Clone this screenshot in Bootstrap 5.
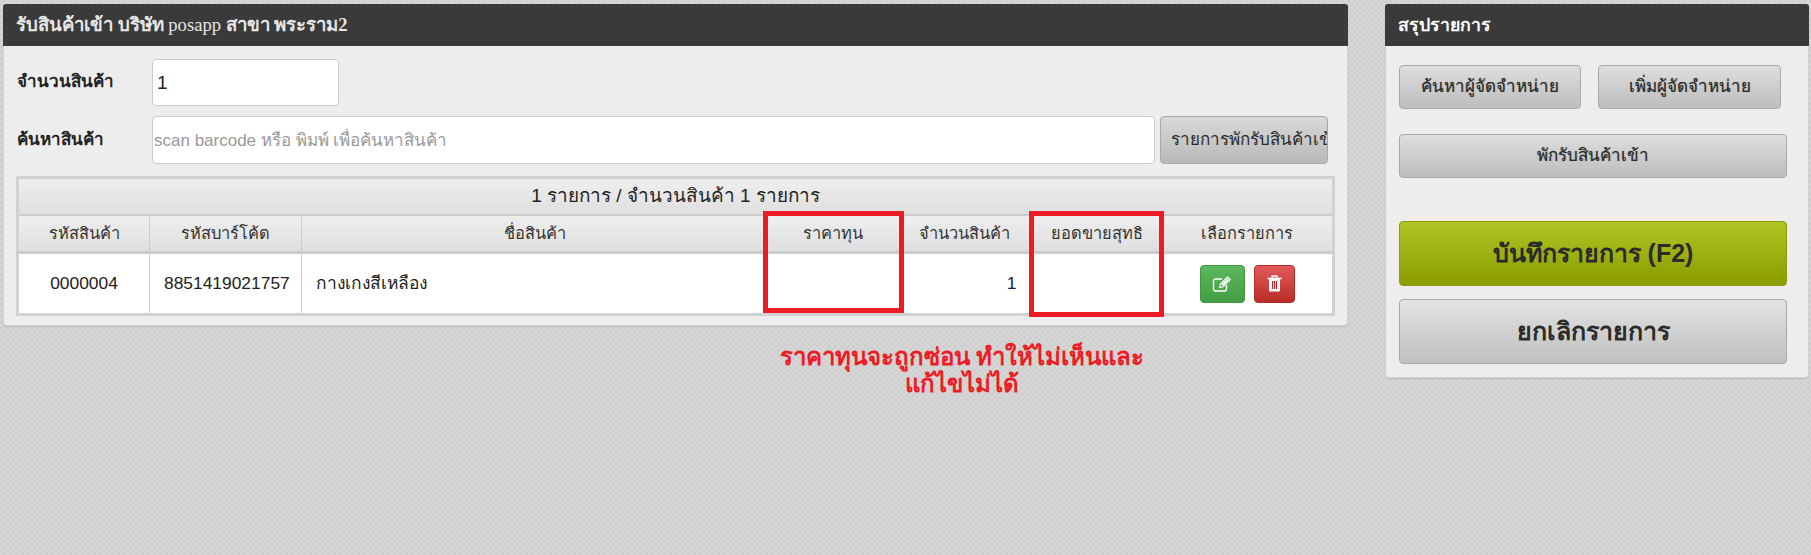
<!DOCTYPE html>
<html lang="th">
<head>
  <meta charset="UTF-8">
  <title>รับสินค้าเข้า</title>
  <link href="https://cdn.jsdelivr.net/npm/bootstrap@5.3.3/dist/css/bootstrap.min.css" rel="stylesheet">
  <style>
    html, body { height: 100%; }
    body {
      font-family: "Liberation Sans", "Noto Sans", sans-serif;
      color: #222;
      background-color: #d2d2d2;
      background-image: conic-gradient(#cfcfcf 25%, #d6d6d6 0 50%, #cfcfcf 0 75%, #d6d6d6 0);
      background-size: 6px 6px;
      overflow: hidden;
    }
    .page-wrap { padding: 4px 2px 0 3px; gap: 37px; position: relative; }
    .side-main { width: 1345px; flex: none; }
    .side-summary { width: 424px; flex: none; }
    .box-panel { background: #ededed; border: 1px solid #d2d2d2; border-top: 0; border-radius: 4px; box-shadow: 0 1px 1px #bbb; }
    .box-head {
      height: 42px; background: #3a3a3a; color: #e6e6e6; border-radius: 3px 3px 0 0;
      font: bold 18.6px/42px "Liberation Serif", "Noto Sans", serif;
      padding-left: 13px; margin: 0 -1px;
    }
    .head-sum { font: bold 17.7px/42px "Liberation Sans", "Noto Sans", sans-serif; color: #fff; }
    .head-light { font-weight: normal; }
    .box-body-main { padding: 13px 13px 12px 13px; height: 279px; }
    .field-row { display: flex; align-items: center; }
    .field-label { width: 135px; flex: none; font-weight: bold; font-size: 17px; margin-bottom: 1px; }
    .field-input {
      height: 48px; border: 1px solid #ccc; border-radius: 4px; background: #fff;
      font-size: 19px; padding: 0 1px; box-shadow: none; color: #222;
    }
    .qty-input { width: 187px; height: 47px; padding-left: 4px; }
    .field-input::placeholder { color: #999; font-size: 17px; }
    .grey-btn {
      border: 1px solid #a9a9a9; border-radius: 4px; color: #2b2b2b;
      background: linear-gradient(#dedede, #bdbdbd);
      font-size: 17px; padding: 0; white-space: nowrap; overflow: hidden;
      text-shadow: 0 0 1px #777;
    }
    .hold-btn { width: 168px; height: 48px; margin-left: 5px; flex: none; text-align: left; padding-left: 10px; text-shadow: none; background: linear-gradient(#d8d8d8, #b9b9b9); }
    .hold-gap { width: 6px; flex: none; }
    .search-row { margin-top: 10px; }
    .goods-table { width: 1319px; table-layout: fixed; border: 3px solid #d2d2d2; margin: 12px 0 0 -1px; background: #fff; border-collapse: collapse; font-size: 17.4px; }
    .goods-table th, .goods-table td { border: 1px solid #ccc; padding: 0 14px; vertical-align: middle; text-align: center; }
    .goods-table thead th { background: linear-gradient(#eeeeee, #dfdfdf); font-weight: normal; color: #333; height: 38px; font-size: 16.4px; border-bottom: 3px solid #ccc; }
    .goods-table thead tr:first-child th { height: 37px; font-size: 18.9px; border-bottom: 2px solid #ccc; color: #222; }
    .goods-table tbody td { height: 62px; background: #fff; }
    .goods-table .name-cell { text-align: left; }
    .goods-table .qty-cell { text-align: right; color: #111a55; }
    .goods-table .no-side { border-left: 0; border-right: 0; }
    .row-btn { width: 45px; height: 38px; border-radius: 4px; display: inline-flex; align-items: center; justify-content: center; padding: 0; }
    .edit-btn { background: linear-gradient(#5cb85c, #449d44); border: 1px solid #419641; }
    .del-btn { width: 41px; margin-left: 9px; background: linear-gradient(#e05a5a, #b92c28); border: 1px solid #b52b27; }
    .box-body-side { padding: 19px 13px 13px 13px; height: 331px; }
    .side-btn { height: 44px; display: block; }
    .find-btn { width: 182px; }
    .add-btn { width: 183px; margin-left: 17px; }
    .park-btn { width: 388px; margin-top: 25px; }
    .big-btn { width: 388px; height: 65px; font-size: 25px; font-weight: bold; text-shadow: none; display: block; }
    .save-btn { margin-top: 43px; border: 1px solid #8a9c00; background: linear-gradient(#b0c524, #8a9c00); }
    .cancel-btn { margin-top: 13px; background: linear-gradient(#e2e2e2, #c0c0c0); }
    .mark-box { position: absolute; border: 5px solid #ed1c24; pointer-events: none; }
    .mark-cost { left: 763px; top: 211px; width: 141px; height: 102px; }
    .mark-net { left: 1029px; top: 211px; width: 135px; height: 106px; }
    .mark-note { position: absolute; left: 732px; top: 343px; width: 460px; text-align: center; color: #ed1c24; font-weight: bold; font-size: 24px; line-height: 27px; }
  </style>
</head>
<body>

  <div class="page-wrap d-flex align-items-start">
    <div class="side-main">
      <div class="box-panel">
        <div class="box-head">รับสินค้าเข้า บริษัท <span class="head-light">posapp</span> สาขา พระราม2</div>
        <div class="box-body-main">
          <div class="field-row">
            <label class="field-label">จำนวนสินค้า</label>
            <input class="field-input qty-input form-control" value="1">
          </div>
          <div class="field-row search-row">
            <label class="field-label">ค้นหาสินค้า</label>
            <input class="field-input form-control flex-grow-1" placeholder="scan barcode หรือ พิมพ์ เพื่อค้นหาสินค้า">
            <button class="btn grey-btn hold-btn">รายการพักรับสินค้าเข้า</button>
            <div class="hold-gap"></div>
          </div>
          <table class="goods-table">
            <colgroup>
              <col style="width:132px"><col style="width:152px"><col style="width:466px"><col style="width:131px"><col style="width:132px"><col style="width:132px"><col>
            </colgroup>
            <thead>
              <tr><th colspan="7">1 รายการ / จำนวนสินค้า 1 รายการ</th></tr>
              <tr>
                <th>รหัสสินค้า</th><th>รหัสบาร์โค้ด</th><th>ชื่อสินค้า</th>
                <th class="no-side">ราคาทุน</th><th class="no-side">จำนวนสินค้า</th><th class="no-side">ยอดขายสุทธิ</th><th class="no-side">เลือกรายการ</th>
              </tr>
            </thead>
            <tbody>
              <tr>
                <td>0000004</td><td>8851419021757</td><td class="name-cell">กางเกงสีเหลือง</td>
                <td class="no-side"></td><td class="qty-cell no-side">1</td><td class="no-side"></td>
                <td class="no-side">
                  <button class="btn row-btn edit-btn" aria-label="แก้ไข">
                    <svg width="20" height="16" viewBox="0 0 20 16" fill="none" stroke="#fff" stroke-width="1.400"><path d="M14.500 9v4a2 2 0 0 1-2 2h-9a2 2 0 0 1-2-2V5a2 2 0 0 1 2-2H10"/><path d="M7.500 11.500l.6-3L15.500 1l2.900 2.700-7.400 7.200z" stroke-width="1.100" stroke-linejoin="round"/><path d="M9.500 8.500L15.500 2.500l1.500 1.400-6 6z" fill="#fff" stroke="none"/></svg>
                  </button><button class="btn row-btn del-btn" aria-label="ลบ">
                    <svg width="15" height="17" viewBox="0 0 15 17" fill="none" stroke="#fff"><path d="M0.500 3.500h14" stroke-width="1.600"/><path d="M5 3V1h5v2" stroke-width="1.300"/><path d="M2.500 4h10v12h-10z" fill="#fff" stroke-width="1"/><path d="M5.500 6v8M7.500 6v8M9.500 6v8" stroke="#a92a26" stroke-width="1.200"/></svg>
                  </button>
                </td>
              </tr>
            </tbody>
          </table>
        </div>
      </div>
    </div>

    <div class="side-summary">
      <div class="box-panel">
        <div class="box-head head-sum">สรุปรายการ</div>
        <div class="box-body-side">
          <div class="d-flex">
            <button class="btn grey-btn side-btn find-btn">ค้นหาผู้จัดจำหน่าย</button>
            <button class="btn grey-btn side-btn add-btn">เพิ่มผู้จัดจำหน่าย</button>
          </div>
          <button class="btn grey-btn side-btn park-btn">พักรับสินค้าเข้า</button>
          <button class="btn grey-btn big-btn save-btn">บันทึกรายการ (F2)</button>
          <button class="btn grey-btn big-btn cancel-btn">ยกเลิกรายการ</button>
        </div>
      </div>
    </div>

    <div class="mark-box mark-cost"></div>
    <div class="mark-box mark-net"></div>
    <div class="mark-note">ราคาทุนจะถูกซ่อน ทำให้ไม่เห็นและ<br>แก้ไขไม่ได้</div>
  </div>

  <script src="https://cdn.jsdelivr.net/npm/bootstrap@5.3.3/dist/js/bootstrap.bundle.min.js"></script>
</body>
</html>
